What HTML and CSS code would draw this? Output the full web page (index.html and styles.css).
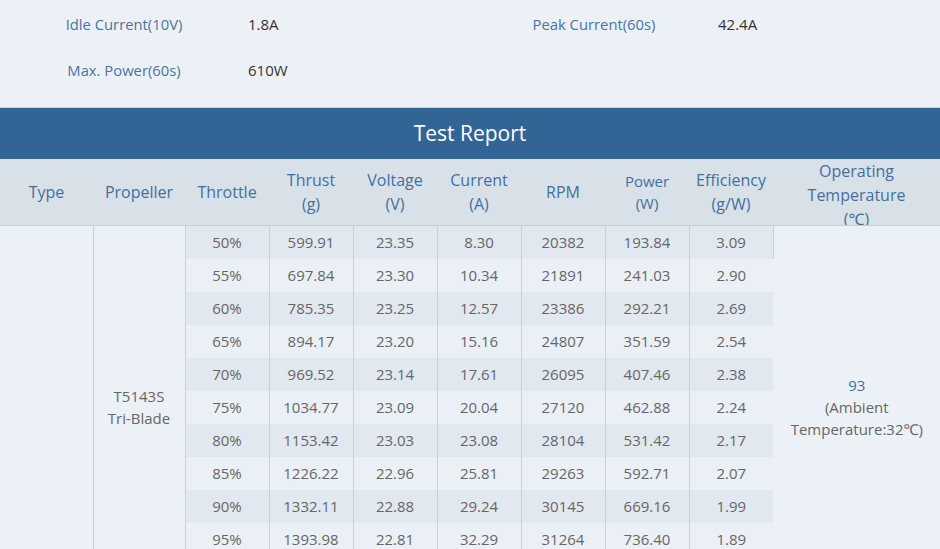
FILE: index.html
```html
<!DOCTYPE html>
<html>
<head>
<meta charset="utf-8">
<link rel="stylesheet" href="styles.css">
</head>
<body>
<div class="page">
  <section class="specs">
    <div class="spec-row">
      <div class="pair"><span class="label">Idle Current(10V)</span><span class="value">1.8A</span></div>
      <div class="pair"><span class="label">Peak Current(60s)</span><span class="value">42.4A</span></div>
    </div>
    <div class="spec-row">
      <div class="pair"><span class="label">Max. Power(60s)</span><span class="value">610W</span></div>
      <div class="pair"></div>
    </div>
  </section>
  <div class="band">Test Report</div>
  <table class="report">
    <colgroup>
      <col class="c-type"><col class="c-prop"><col class="c-n"><col class="c-n"><col class="c-n"><col class="c-n"><col class="c-n"><col class="c-n"><col class="c-n"><col class="c-temp">
    </colgroup>
    <thead>
      <tr>
        <th><div class="hc">Type</div></th>
        <th><div class="hc">Propeller</div></th>
        <th><div class="hc">Throttle</div></th>
        <th><div class="hc">Thrust<br>(g)</div></th>
        <th><div class="hc">Voltage<br>(V)</div></th>
        <th><div class="hc">Current<br>(A)</div></th>
        <th><div class="hc">RPM</div></th>
        <th><div class="hc small">Power<br>(W)</div></th>
        <th><div class="hc">Efficiency<br>(g/W)</div></th>
        <th><div class="hc tall">Operating<br>Temperature<br>(℃)</div></th>
      </tr>
    </thead>
    <tbody>
      <tr class="dark">
        <td rowspan="11" class="span"></td>
        <td rowspan="11" class="span prop">T5143S<br>Tri-Blade</td>
        <td>50%</td><td>599.91</td><td>23.35</td><td>8.30</td><td>20382</td><td>193.84</td><td>3.09</td>
        <td rowspan="11" class="span temp"><span class="hi">93</span><br>(Ambient<br>Temperature:32℃)</td>
      </tr>
      <tr class="light"><td>55%</td><td>697.84</td><td>23.30</td><td>10.34</td><td>21891</td><td>241.03</td><td>2.90</td></tr>
      <tr class="dark"><td>60%</td><td>785.35</td><td>23.25</td><td>12.57</td><td>23386</td><td>292.21</td><td>2.69</td></tr>
      <tr class="light"><td>65%</td><td>894.17</td><td>23.20</td><td>15.16</td><td>24807</td><td>351.59</td><td>2.54</td></tr>
      <tr class="dark"><td>70%</td><td>969.52</td><td>23.14</td><td>17.61</td><td>26095</td><td>407.46</td><td>2.38</td></tr>
      <tr class="light"><td>75%</td><td>1034.77</td><td>23.09</td><td>20.04</td><td>27120</td><td>462.88</td><td>2.24</td></tr>
      <tr class="dark"><td>80%</td><td>1153.42</td><td>23.03</td><td>23.08</td><td>28104</td><td>531.42</td><td>2.17</td></tr>
      <tr class="light"><td>85%</td><td>1226.22</td><td>22.96</td><td>25.81</td><td>29263</td><td>592.71</td><td>2.07</td></tr>
      <tr class="dark"><td>90%</td><td>1332.11</td><td>22.88</td><td>29.24</td><td>30145</td><td>669.16</td><td>1.99</td></tr>
      <tr class="light"><td>95%</td><td>1393.98</td><td>22.81</td><td>32.29</td><td>31264</td><td>736.40</td><td>1.89</td></tr>
      <tr class="dark"><td>100%</td><td>1450.36</td><td>22.74</td><td>35.10</td><td>32120</td><td>798.17</td><td>1.82</td></tr>
    </tbody>
  </table>
</div>
</body>
</html>
```

FILE: styles.css
```css
html, body {
  margin: 0;
  padding: 0;
  background: #ecf1f8;
}
body {
  font-family: "Open Sans", "Noto Sans", sans-serif;
  width: 940px;
  height: 549px;
  overflow: hidden;
}
.page {
  width: 940px;
}
.specs {
  padding: 1px 0 14px;
  background: #ecf1f8;
}
.spec-row {
  display: grid;
  grid-template-columns: 470px 470px;
  height: 46px;
  line-height: 46px;
  font-size: 15px;
}
.pair {
  display: grid;
  grid-template-columns: 248px auto;
}
.label {
  text-align: center;
  color: #4a74a1;
  font-size: 14.8px;
}
.value {
  color: #333;
}
.band {
  height: 52px;
  line-height: 51px;
  background: #326496;
  border-top: 1px solid #c3d2e2;
  box-sizing: border-box;
  color: #fff;
  text-align: center;
  font-size: 21px;
}
.report {
  width: 940px;
  table-layout: fixed;
  border-collapse: collapse;
  border-spacing: 0;
}
.c-type { width: 93px; }
.c-prop { width: 92px; }
.c-n { width: 84px; }
.c-temp { width: 167px; }
.report thead tr {
  background: #d9e1e8;
}
.report th {
  padding: 0;
  height: 66px;
  font-weight: normal;
  font-size: 16px;
  color: #41709f;
  border-bottom: 1px solid #c7cfd8;
}
.hc {
  height: 66px;
  box-sizing: border-box;
  overflow: hidden;
  display: flex;
  flex-direction: column;
  justify-content: center;
  align-items: center;
  line-height: 24px;
  text-align: center;
}
.hc.small {
  font-size: 15px;
  line-height: 22px;
}
.hc.tall {
  padding-top: 6px;
}
.report td {
  padding: 0 0 1px;
  height: 32px;
  text-align: center;
  font-size: 15px;
  color: #666;
  border-right: 1px solid #c9d0d9;
}
.report td:last-child {
  border-right: none;
}
.report td.temp {
  border-right: none;
}
tr.dark td { background: #e2e8ef; }
tr.light td { background: #ebf0f7; }
.report td.span {
  background: #ecf1f8;
  line-height: 22px;
  vertical-align: middle;
  padding: 0 0 2px;
}
.hi {
  color: #3f70a2;
}
```
